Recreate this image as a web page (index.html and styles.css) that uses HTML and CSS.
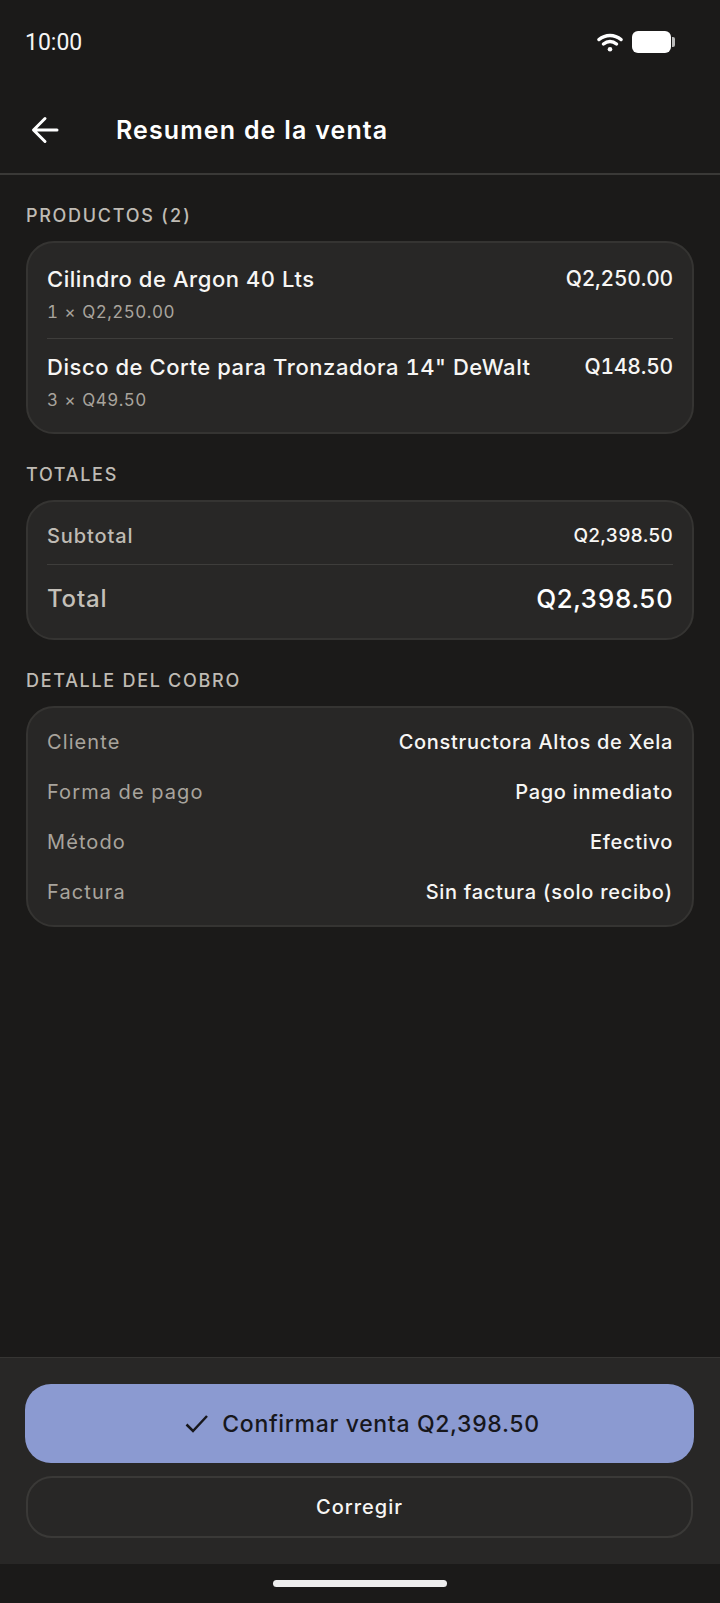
FILE: index.html
```html
<!DOCTYPE html>
<html lang="es">
  <head>
    <meta charset="UTF-8" />
    <meta name="viewport" content="width=device-width, initial-scale=1.0" />
    <title>Resumen de la venta</title>
    <link rel="stylesheet" href="styles.css">
  </head>
  <body>
    <div class="screen">
      <!-- Status bar -->
      <div class="status-bar">
        <span class="clock">10:00</span>
        <div class="status-icons">
          <svg class="wifi" width="26" height="20" viewBox="0 0 26 20">
            <path d="M2 7.500C8.500 2 17.500 2 24 7.500" />
            <path d="M6.500 12C10.500 8.800 15.500 8.800 19.500 12" />
            <circle cx="13" cy="17.200" r="2.300" />
          </svg>
          <svg class="battery" width="39" height="22" viewBox="0 0 39 22">
            <rect x="0" y="0" width="39" height="22" rx="6" />
          </svg>
          <span class="battery-tip"></span>
        </div>
      </div>

      <!-- Header -->
      <header class="top-bar">
        <svg class="back" width="28" height="28" viewBox="0 0 28 28">
          <path d="M26 14H3M14 2.500L2.500 14L14 25.500" />
        </svg>
        <h1>Resumen de la venta</h1>
      </header>

      <main class="content">
        <h2 class="section-title">PRODUCTOS (2)</h2>
        <section class="card">
          <div class="product">
            <div>
              <div class="product-name">Cilindro de Argon 40 Lts</div>
              <div class="product-qty">1 × Q2,250.00</div>
            </div>
            <div class="product-price">Q2,250.00</div>
          </div>
          <div class="product product-last">
            <div>
              <div class="product-name">Disco de Corte para Tronzadora 14" DeWalt</div>
              <div class="product-qty">3 × Q49.50</div>
            </div>
            <div class="product-price">Q148.50</div>
          </div>
        </section>

        <h2 class="section-title">TOTALES</h2>
        <section class="card">
          <div class="subtotal">
            <span class="subtotal-label">Subtotal</span>
            <span class="subtotal-value">Q2,398.50</span>
          </div>
          <div class="total">
            <span class="total-label">Total</span>
            <span class="total-value">Q2,398.50</span>
          </div>
        </section>

        <h2 class="section-title">DETALLE DEL COBRO</h2>
        <section class="card detail-card">
          <div class="detail"><span class="detail-label">Cliente</span><span class="detail-value">Constructora Altos de Xela</span></div>
          <div class="detail"><span class="detail-label">Forma de pago</span><span class="detail-value">Pago inmediato</span></div>
          <div class="detail"><span class="detail-label">Método</span><span class="detail-value">Efectivo</span></div>
          <div class="detail"><span class="detail-label">Factura</span><span class="detail-value">Sin factura (solo recibo)</span></div>
        </section>
      </main>

      <!-- Actions -->
      <footer class="actions">
        <button class="btn-confirm" type="button">
          <svg width="24" height="24" viewBox="0 0 24 24">
            <path d="M1.500 12.500L8 19L22 4" />
          </svg>
          Confirmar venta Q2,398.50
        </button>
        <button class="btn-fix" type="button">Corregir</button>
      </footer>

      <div class="nav-bar"><span class="home-pill"></span></div>
    </div>
  </body>
</html>
```

FILE: styles.css
```css
* {
  box-sizing: border-box;
}
body {
  margin: 0;
  background-color: #1b1a19;
  font-family: Inter, "Noto Sans", sans-serif;
  font-variant-numeric: tabular-nums;
  color: #fff;
}
.screen {
  display: flex;
  flex-direction: column;
  width: 720px;
  height: 1603px;
  overflow: hidden;
}
.status-bar {
  display: flex;
  justify-content: space-between;
  align-items: center;
  height: 84px;
  padding: 0 45px 0 25px;
}
.clock {
  font-family: Roboto, sans-serif;
  font-size: 23px;
  color: #f5f5f5;
}
.status-icons {
  display: flex;
  align-items: center;
}
.wifi {
  margin-right: 9px;
}
.wifi path {
  fill: none;
  stroke: #fff;
  stroke-width: 3.500;
  stroke-linecap: round;
}
.wifi circle,
.battery rect {
  fill: #fff;
}
.battery-tip {
  width: 3px;
  height: 10px;
  margin-left: 1px;
  border-radius: 0 2px 2px 0;
  background-color: #bbb;
}
.top-bar {
  display: flex;
  align-items: center;
  height: 91px;
  padding: 3px 0 0 31px;
  border-bottom: 2px solid #3a3937;
}
.back {
  margin-right: 57px;
}
.back path {
  fill: none;
  stroke: #fff;
  stroke-width: 3;
  stroke-linecap: round;
  stroke-linejoin: round;
}
h1 {
  margin: 0;
  font-size: 25px;
  font-weight: 600;
  letter-spacing: 1.100px;
}
.content {
  flex: 1;
  padding: 0 26px;
}
.section-title {
  height: 66px;
  margin: 0;
  padding-top: 29px;
  font-size: 18px;
  font-weight: 500;
  line-height: 24px;
  letter-spacing: 1.700px;
  color: #bfbbb4;
}
.card {
  padding: 0 19px;
  background-color: #282726;
  border: 2px solid #353432;
  border-radius: 28px;
}
.product {
  display: flex;
  justify-content: space-between;
  height: 96px;
  padding-top: 21px;
  border-bottom: 1px solid #3e3d3b;
}
.product-last {
  height: 93px;
  padding-top: 13px;
  border-bottom: none;
}
.product-name {
  font-size: 22px;
  font-weight: 500;
  line-height: 30px;
  letter-spacing: 0.550px;
  color: #f7f6f4;
}
.product-price {
  font-size: 21px;
  font-weight: 500;
  line-height: 30px;
  letter-spacing: -0.200px;
  color: #f7f6f4;
}
.product-qty {
  margin-top: 6px;
  font-size: 17px;
  line-height: 24px;
  letter-spacing: 0.500px;
  word-spacing: 1px;
  color: #a8a49d;
}
.subtotal,
.total {
  display: flex;
  justify-content: space-between;
  align-items: center;
}
.subtotal {
  height: 63px;
  padding-top: 5px;
  border-bottom: 1px solid #3e3d3b;
}
.subtotal-label {
  font-size: 20px;
  font-weight: 500;
  letter-spacing: 0.900px;
  color: #bfbbb4;
}
.subtotal-value {
  font-size: 19px;
  font-weight: 500;
  letter-spacing: 0.100px;
  color: #f7f6f4;
}
.total {
  height: 73px;
  padding-bottom: 7px;
}
.total-label {
  font-size: 24px;
  font-weight: 500;
  letter-spacing: 0.800px;
  color: #c4c0b9;
}
.total-value {
  font-size: 26px;
  font-weight: 500;
  letter-spacing: 0.200px;
  color: #fff;
}
.detail-card {
  padding-top: 9px;
  padding-bottom: 8px;
}
.detail {
  display: flex;
  justify-content: space-between;
  align-items: center;
  height: 50px;
  font-size: 20px;
}
.detail-label {
  letter-spacing: 1.100px;
  color: #a8a49d;
}
.detail-value {
  font-weight: 500;
  letter-spacing: 0.700px;
  color: #f7f6f4;
}
.actions {
  display: flex;
  flex-direction: column;
  gap: 13px;
  height: 207px;
  padding: 26px 26px 0 25px;
  background-color: #282726;
  border-top: 1px solid #363533;
}
button {
  display: flex;
  justify-content: center;
  align-items: center;
  font-family: inherit;
  font-weight: 500;
  cursor: pointer;
}
.btn-confirm {
  gap: 13px;
  height: 79px;
  padding-left: 12px;
  font-size: 23px;
  letter-spacing: 0.650px;
  color: #17171c;
  background-color: #8b9ad1;
  border: none;
  border-radius: 26px;
}
.btn-confirm path {
  fill: none;
  stroke: #17171c;
  stroke-width: 2.500;
}
.btn-fix {
  height: 62px;
  margin: 0 1px;
  font-size: 20px;
  letter-spacing: 1px;
  color: #f7f6f4;
  background-color: transparent;
  border: 2px solid #3a3937;
  border-radius: 26px;
}
.nav-bar {
  display: flex;
  justify-content: center;
  height: 39px;
  padding-top: 16px;
}
.home-pill {
  width: 174px;
  height: 7px;
  border-radius: 4px;
  background-color: #eeeeee;
}
```
